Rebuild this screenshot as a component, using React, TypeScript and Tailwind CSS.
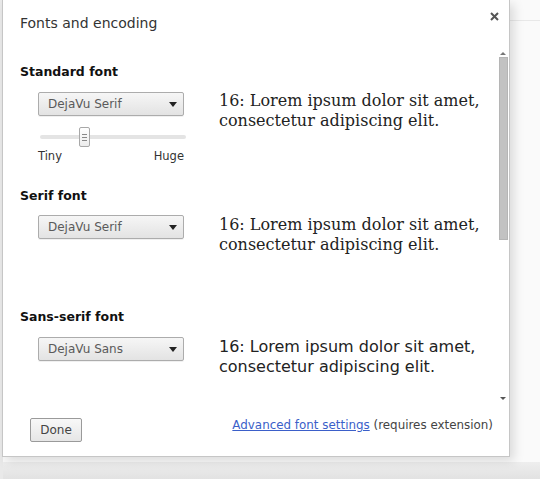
import React from "react";

const sans = { fontFamily: '"DejaVu Sans", sans-serif' };

function Select({ label }: { label: string }) {
  return (
    <div className="ml-[18px] flex h-[24px] w-[146px] items-center justify-between rounded-[2px] border border-[#acacac] bg-gradient-to-b from-[#f6f6f6] to-[#e3e3e3] pl-[9px] pr-[6px] text-[12px] text-[#5a5a5a] shadow-[0_1px_0_rgba(0,0,0,0.06)]">
      <span>{label}</span>
      <svg width="8" height="5" viewBox="0 0 8 5">
        <path d="M0 0 L8 0 L4 5 Z" fill="#222" />
      </svg>
    </div>
  );
}

function Sample({ serif }: { serif: boolean }) {
  return (
    <div
      className="text-[16px] leading-[20px] text-[#222]"
      style={{ fontFamily: serif ? '"DejaVu Serif", serif' : '"DejaVu Sans", sans-serif' }}
    >
      16: Lorem ipsum dolor sit amet,
      <br />
      consectetur adipiscing elit.
    </div>
  );
}

export default function App() {
  return (
    <div className="relative h-[479px] w-[540px] overflow-hidden bg-[#fafafa]" style={sans}>
      {/* background page */}
      <div className="absolute right-0 top-[20px] h-px w-[30px] bg-[#e8e8e8]" />
      <div className="absolute bottom-0 left-0 h-[17px] w-full bg-gradient-to-b from-[#eeeeee] to-[#e2e2e2]" />
      <div className="absolute left-0 top-0 h-full w-[3px] bg-[#e9e9e9]" />

      {/* dialog */}
      <div className="absolute left-[2px] top-0 flex h-[457px] w-[508px] flex-col border border-t-0 border-[#c6c6c6] bg-white shadow-[4px_4px_10px_rgba(0,0,0,0.13)]">
        {/* header */}
        <div className="relative h-[48px] pl-[17px] pt-[13px] text-[14px] text-[#333]">
          Fonts and encoding
          <svg className="absolute right-[10px] top-[12px]" width="9" height="9" viewBox="0 0 9 9">
            <path d="M1 1 L8 8 M8 1 L1 8" stroke="#555" strokeWidth="2" />
          </svg>
        </div>

        {/* content */}
        <div className="relative flex-1">
          <div className="pl-[17px] pr-[20px]">
            {/* standard */}
            <div className="mt-[16px] text-[12.5px] font-bold leading-[16px] text-[#111]">Standard font</div>
            <div className="mt-[12px] flex">
              <div className="w-[200px]">
                <Select label="DejaVu Serif" />
                <div className="ml-[20px] mt-[11px] w-[146px]">
                  <div className="relative h-[20px]">
                    <div className="absolute left-0 right-0 top-[8px] h-[4px] rounded-full bg-[#e4e4e4]" />
                    <div className="absolute left-[39px] top-0 flex h-[20px] w-[11px] flex-col items-center justify-center gap-[2px] rounded-[2px] border border-[#a8a8a8] bg-gradient-to-b from-white to-[#ececec]">
                      <div className="h-px w-[5px] bg-[#888]" />
                      <div className="h-px w-[5px] bg-[#888]" />
                      <div className="h-px w-[5px] bg-[#888]" />
                    </div>
                  </div>
                  <div className="-ml-[2px] mr-[2px] mt-[2px] flex justify-between text-[11.5px] leading-[14px] text-[#333]">
                    <span>Tiny</span>
                    <span>Huge</span>
                  </div>
                </div>
              </div>
              <div className="ml-[-1px] mt-[-1px]">
                <Sample serif />
              </div>
            </div>

            {/* serif */}
            <div className="mt-[25px] text-[12.5px] font-bold leading-[16px] text-[#111]">Serif font</div>
            <div className="mt-[11px] flex">
              <div className="w-[200px]">
                <Select label="DejaVu Serif" />
              </div>
              <div className="ml-[-1px] mt-0">
                <Sample serif />
              </div>
            </div>

            {/* sans */}
            <div className="mt-[54px] text-[12.5px] font-bold leading-[16px] text-[#111]">Sans-serif font</div>
            <div className="mt-[12px] flex">
              <div className="w-[200px]">
                <Select label="DejaVu Sans" />
              </div>
              <div className="ml-[-1px] mt-0">
                <Sample serif={false} />
              </div>
            </div>
          </div>

          {/* scrollbar */}
          <div className="absolute right-[1px] top-0 flex h-[356px] w-[10px] flex-col items-center">
            <svg className="mt-[4px]" width="6" height="3" viewBox="0 0 6 3">
              <path d="M0 3 L6 3 L3 0 Z" fill="#777" />
            </svg>
            <div className="mt-[2px] h-[183px] w-[9px] border border-[#b5b5b5] bg-[#c2c2c2]" />
            <div className="flex-1" />
            <svg className="mb-[4px]" width="6" height="3" viewBox="0 0 6 3">
              <path d="M0 0 L6 0 L3 3 Z" fill="#555" />
            </svg>
          </div>
        </div>

        {/* footer */}
        <div className="flex h-[55px] items-start justify-between pl-[27px] pr-[16px] pt-[17px]">
          <div className="flex h-[24px] w-[52px] items-center justify-center rounded-[2px] border border-[#9a9a9a] bg-gradient-to-b from-[#f8f8f8] to-[#e6e6e6] text-[12px] text-[#444]">
            Done
          </div>
          <div className="mt-[-1px] text-[11.9px] text-[#444]">
            <span className="text-[#3b5fc9] underline">Advanced font settings</span> (requires extension)
          </div>
        </div>
      </div>
    </div>
  );
}
